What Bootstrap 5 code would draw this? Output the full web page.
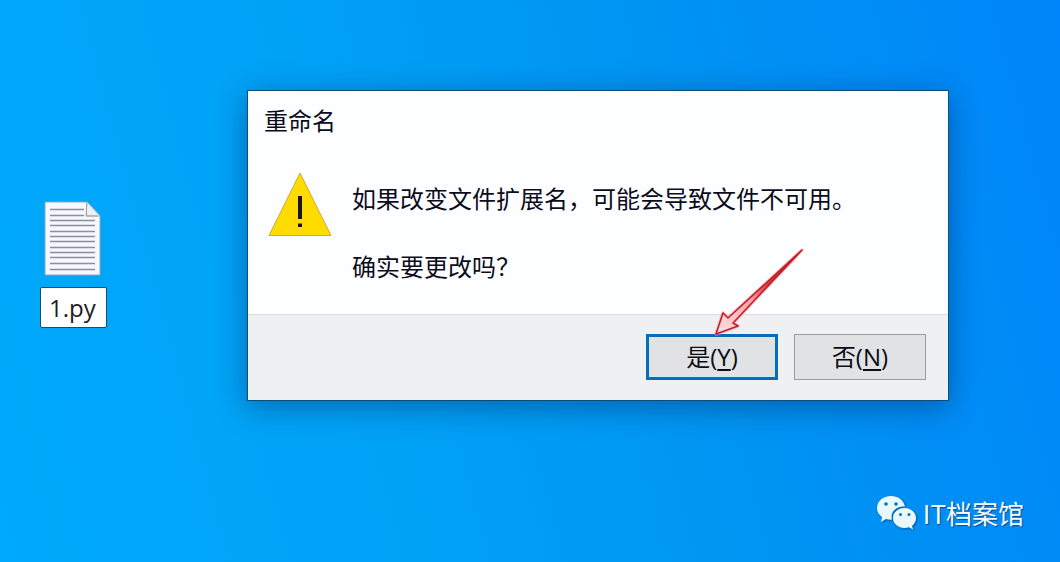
<!DOCTYPE html>
<html lang="zh-CN">
<head>
<meta charset="utf-8">
<meta name="viewport" content="width=device-width, initial-scale=1">
<title>重命名</title>
<link href="https://cdn.jsdelivr.net/npm/bootstrap@5.3.0/dist/css/bootstrap.min.css" rel="stylesheet">
<style>
  body {
    font-family: "Open Sans", "Noto Sans CJK SC", sans-serif;
    font-size: 24px;
    line-height: 34px;
    color: #0c0c1c;
  }
  .desktop {
    padding: 90px 111px 0 40px;
    background: linear-gradient(75deg, #00a9fb 0%, #00a2f6 35%, #0094f2 65%, #0086fa 100%);
  }
  .desktop-file { width: 67px; margin: 111px 140px 0 0; gap: 10px; }
  .file-name {
    height: 41px;
    padding: 0 0 0 8px;
    border: 1px solid #1d4a66;
    border-radius: 2px;
    background: #fff;
    color: #1c1c24;
  }
  .rename-dialog {
    border: 1px solid #0b4f7c;
    background: #fdfeff;
    box-shadow: 0 6px 28px rgba(0, 30, 90, .45);
  }
  .dialog-heading { font-size: 24px; line-height: 34px; padding: 13px 16px 0; }
  .dialog-message { padding: 44px 20px 30px; gap: 20px; }
  .message-text { gap: 34px; }
  .warning-icon { margin-top: -10px; }
  .dialog-actions {
    padding: 19px 22px 20px;
    gap: 16px;
    background: #eff0f2;
    border-top: 1px solid #d9dbde;
  }
  .dialog-btn {
    width: 132px;
    height: 46px;
    padding: 0;
    border: 1px solid #9a9c9f;
    background: #e1e2e4;
    color: #0c0c14;
    font-family: "Open Sans", "Noto Sans CJK SC", sans-serif;
    font-size: 24px;
    line-height: 34px;
  }
  .dialog-btn.is-default { border: 3px solid #0a6cb8; box-shadow: inset 0 0 0 1px #c9ecfb; }
  .dialog-btn u { text-decoration-thickness: 2px; text-underline-offset: 3px; }
  .pointer-arrow { left: 67px; bottom: 42px; pointer-events: none; }
  .account-mark {
    right: 36px;
    bottom: 30px;
    gap: 6px;
    font-family: "Noto Sans CJK SC", sans-serif;
    font-size: 26px;
    line-height: 38px;
    color: #f2fbff;
    text-shadow: 1px 1px 1px rgba(0, 50, 110, .7);
  }
  .account-mark svg { filter: drop-shadow(1px 1px 1px rgba(0, 50, 110, .6)); }
</style>
</head>
<body>
<main class="desktop position-relative min-vh-100 d-flex align-items-start">
  <div class="desktop-file d-flex flex-column flex-shrink-0">
    <svg class="ms-1" width="58" height="76" viewBox="0 0 58 76" aria-hidden="true">
      <path d="M1 1H43L56 15V74H1Z" fill="#f5f8fd" stroke="#8fa7b5"/>
      <path d="M6 8.500H40M6 14.500H40M6 19.500H51M6 24.500H51M6 30.500H51M6 35.500H51M6 40.500H51M6 46.500H51M6 51.500H51M6 56.500H51M6 62.500H51M6 68.500H51" stroke="#8b8f9c" stroke-width="1.500"/>
      <path d="M43 1L56 15H42Z" fill="#e6f1f9" stroke="#aab6c0"/>
      <path d="M42.500 2V15H54" fill="none" stroke="#b3989c"/>
    </svg>
    <input class="file-name w-100" type="text" value="1.py" aria-label="文件名">
  </div>

  <section class="rename-dialog flex-grow-1" role="dialog" aria-labelledby="dialogTitle">
    <h1 class="dialog-heading fw-normal m-0" id="dialogTitle">重命名</h1>
    <div class="dialog-message d-flex align-items-start">
      <svg class="warning-icon flex-shrink-0" width="64" height="65" viewBox="0 0 64 65" role="img" aria-label="警告">
        <path d="M32 1L63 63.500H1Z" fill="#fedc00" stroke="#c7ab3b"/>
        <path d="M30 24H34V47H30ZM30 51.500H34V55H30Z" fill="#171320"/>
      </svg>
      <div class="message-text d-flex flex-column">
        <p class="m-0">如果改变文件扩展名，可能会导致文件不可用。</p>
        <p class="m-0">确实要更改吗？</p>
      </div>
    </div>
    <div class="dialog-actions d-flex justify-content-end">
      <div class="position-relative d-flex">
        <button type="button" class="btn dialog-btn is-default rounded-0">是(<u>Y</u>)</button>
        <svg class="pointer-arrow position-absolute" width="92" height="92" viewBox="0 0 92 92" aria-hidden="true">
          <defs>
            <linearGradient id="arrowFill" x1="0" y1="1" x2="1" y2="0">
              <stop offset="0" stop-color="#ffe3e5"/>
              <stop offset=".4" stop-color="#f6a6a9"/>
              <stop offset=".6" stop-color="#d63a3d"/>
              <stop offset="1" stop-color="#8f1420"/>
            </linearGradient>
          </defs>
          <path d="M3 88L10 67L15 72L89 4L20 77L25 80Z" fill="url(#arrowFill)" stroke="#f9a0a4" stroke-width="3.500" stroke-linejoin="round" opacity=".6"/>
          <path d="M3 88L10 67L15 72L89 4L20 77L25 80Z" fill="url(#arrowFill)" stroke="#c3202b" stroke-width="1.600" stroke-linejoin="round"/>
        </svg>
      </div>
      <button type="button" class="btn dialog-btn rounded-0">否(<u>N</u>)</button>
    </div>
  </section>

  <div class="account-mark position-absolute d-flex align-items-center">
    <svg width="41" height="36" viewBox="0 0 41 36" aria-hidden="true">
      <path d="M15 1C7 1 1 6 1 13c0 4 2 7 5 9l-1 5 5-3c2 .6 4 .8 6 .6C14 17 20 11 29 11.500 27.500 5 22 1 15 1Z" fill="#e8f8ff"/>
      <path d="M28.500 13C22 13 17 17.500 17 23s5 10 11.500 10c1.500 0 3-.2 4.500-.7l4 2.200-1-3.600C38.500 29 40 26 40 23c0-5.500-5-10-11.500-10Z" fill="#e8f8ff"/>
      <circle cx="10" cy="9" r="1.800" fill="#0872bd"/><circle cx="20" cy="9" r="1.800" fill="#0872bd"/>
      <circle cx="24.500" cy="19.500" r="1.500" fill="#0872bd"/><circle cx="33" cy="19.500" r="1.500" fill="#0872bd"/>
    </svg>
    <span>IT档案馆</span>
  </div>
</main>
<script src="https://cdn.jsdelivr.net/npm/bootstrap@5.3.0/dist/js/bootstrap.bundle.min.js"></script>
</body>
</html>
